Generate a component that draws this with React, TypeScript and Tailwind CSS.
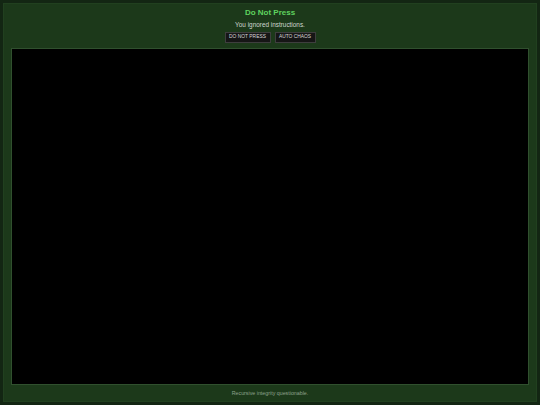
export default function App() {
  return (
    <div className="h-[405px] w-[540px] bg-[#132613] p-[3px] font-['Liberation_Sans',Arial,sans-serif]">
      <div className="flex h-full flex-col items-center border border-[#21401f] bg-[#1c391a] px-[7px] pt-[4px] pb-[4px]">
        <h1 className="text-[8px] leading-[10px] font-bold text-[#5fd35f]">Do Not Press</h1>
        <p className="mt-[3px] text-[6.4px] leading-[8px] text-[#cfd6cf]">You ignored instructions.</p>
        <div className="mt-[3px] flex gap-[4px]">
          <button className="h-[11px] w-[46px] border border-[#3e3e3e] bg-[#161616] text-[4.9px] leading-none text-[#d8d8d8]">
            DO NOT PRESS
          </button>
          <button className="h-[11px] w-[41px] border border-[#3e3e3e] bg-[#161616] text-[4.9px] leading-none text-[#d8d8d8]">
            AUTO CHAOS
          </button>
        </div>
        <div className="mt-[5px] w-full flex-1 border border-[#30502e] bg-black" />
        <p className="mt-[5px] text-[5.3px] leading-[7px] text-[#8ea28c]">Recursive integrity questionable.</p>
      </div>
    </div>
  );
}
